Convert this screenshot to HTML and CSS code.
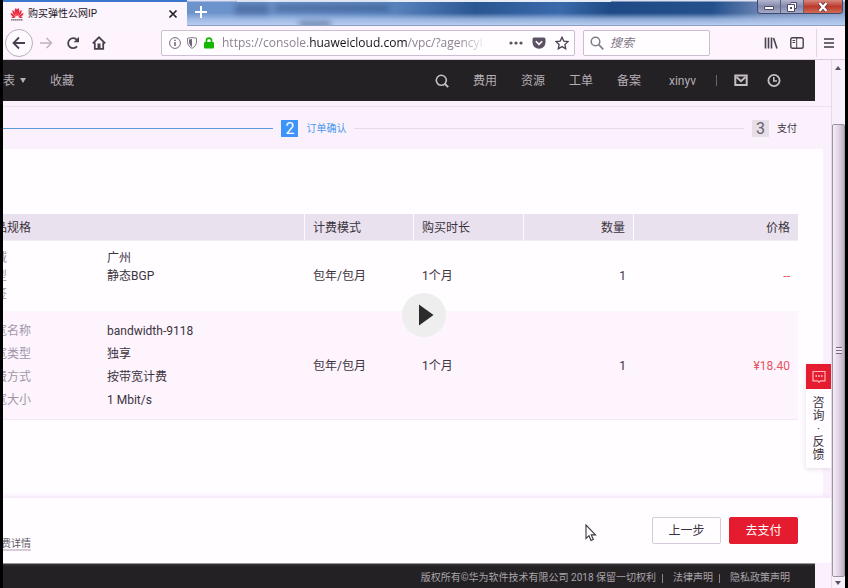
FILE: index.html
```html
<!DOCTYPE html>
<html lang="zh-CN">
<head>
<meta charset="utf-8">
<title>购买弹性公网IP</title>
<meta name="viewport" content="width=device-width, initial-scale=1">
<link rel="stylesheet" href="styles.css">
</head>
<body>
<div class="window">
  <div class="titlebar">
    <div class="tab">
      <svg class="tab-logo" viewBox="0 0 14 14" width="14" height="14" aria-hidden="true">
        <g fill="#e8283c">
          <path d="M6.8 9.6C4.6 7 4 3.600 5.300 1.300 6.300 1.300 7 2 7 3.200z"/>
          <path d="M7.200 9.600C9.400 7 10 3.600 8.700 1.300 7.700 1.300 7 2 7 3.200z"/>
          <path d="M6.200 9.800C3.200 8 1.800 5.400 2.500 3 3.800 3.200 5 5.500 6.200 9.800z"/>
          <path d="M7.800 9.800C10.800 8 12.200 5.400 11.500 3 10.200 3.200 9 5.500 7.800 9.800z"/>
          <path d="M5.700 10.200C2.700 10 .7 8.300.5 5.900 2 6 4 7.600 5.700 10.200z"/>
          <path d="M8.300 10.200C11.300 10 13.300 8.300 13.500 5.900 12 6 10 7.600 8.300 10.200z"/>
          <path d="M5.500 10.600C3.600 11.500 2 11.100 1.300 9.900 2.800 9.600 4.200 9.900 5.500 10.600z"/>
          <path d="M8.500 10.600C10.400 11.500 12 11.100 12.700 9.900 11.200 9.600 9.800 9.900 8.500 10.600z"/>
        </g>
        <path d="M1 12.800h12" stroke="#6d5560" stroke-width="1.200" stroke-dasharray="1.500 .4"/>
      </svg>
      <span class="tab-title">购买弹性公网IP</span>
      <button class="icon-button" aria-label="关闭标签页"><svg viewBox="0 0 10 10" width="10" height="10"><path d="M1.500 1.500l7 7M8.500 1.500l-7 7" stroke="#222" stroke-width="1.700"/></svg></button>
    </div>
    <button class="icon-button new-tab" aria-label="新建标签页"><svg viewBox="0 0 12 12" width="12" height="12"><path d="M6 0v12M0 6h12" stroke="#fff" stroke-width="2"/></svg></button>
    <div class="glass"><i class="smudge smudge-top"></i><i class="smudge smudge-left"></i><i class="smudge smudge-low"></i></div>
    <div class="window-controls">
      <button aria-label="最小化"><svg viewBox="0 0 12 10" width="12" height="10"><path d="M1.500 4.500h9v3h-9z" fill="#fff" stroke="#4d4a66"/></svg></button>
      <button aria-label="还原"><svg viewBox="0 0 12 10" width="12" height="10"><path d="M4.500.5h6v6h-2M1.500 2.500h7v7h-7z" fill="#fff" stroke="#4d4a66"/><path d="M4 5h2v2H4z" fill="#4d4a66"/></svg></button>
      <button class="close" aria-label="关闭"><svg viewBox="0 0 12 10" width="12" height="10"><path d="M2.500 1l7 8M9.500 1l-7 8" stroke="#6b3038" stroke-width="4"/><path d="M2.500 1l7 8M9.500 1l-7 8" stroke="#fff" stroke-width="2.400"/></svg></button>
    </div>
  </div>

  <div class="toolbar">
    <button class="icon-button back" aria-label="后退"><svg viewBox="0 0 16 16" width="16" height="16"><path d="M14 8H2.500M8 2.500L2.500 8 8 13.500" fill="none" stroke="#4a4150" stroke-width="1.800"/></svg></button>
    <button class="icon-button forward" aria-label="前进"><svg viewBox="0 0 16 16" width="16" height="16"><path d="M2 8h11.500M8.500 3l5 5-5 5" fill="none" stroke="#bdb2c1" stroke-width="1.500"/></svg></button>
    <button class="icon-button" aria-label="重新载入"><svg viewBox="0 0 14 14" width="14" height="14"><path d="M11 10.400A5 5 0 1 1 11 4" fill="none" stroke="#4a4150" stroke-width="1.800"/><path d="M13 .8v5.400H7.600z" fill="#4a4150"/></svg></button>
    <button class="icon-button home" aria-label="主页"><svg viewBox="0 0 14 14" width="14" height="14"><path d="M.8 7.300L7 1.300l6.200 6M2.800 6.500v6.300h8.400V6.500" fill="none" stroke="#4a4150" stroke-width="1.800"/><path d="M5.500 7.500h3V13h-3z" fill="#4a4150"/></svg></button>
    <div class="address">
      <svg viewBox="0 0 12 12" width="12" height="12" aria-hidden="true"><circle cx="6" cy="6" r="5.400" fill="none" stroke="#73697a" stroke-width="1"/><path d="M6 5v4M6 2.700v1.400" stroke="#5e5566" stroke-width="1.400"/></svg>
      <svg viewBox="0 0 12 12" width="12" height="12" aria-hidden="true"><path d="M1.500 1.200L6 .6l4.500.6v3.600c0 3-1.800 5-4.500 6.600-2.700-1.600-4.500-3.600-4.500-6.600z" fill="none" stroke="#82788a"/><path d="M6 2v8c-1.800-1.300-3-2.800-3-5V2.400z" fill="#6f6577"/></svg>
      <svg viewBox="0 0 12 12" width="12" height="12" aria-hidden="true"><path d="M3.500 6V3.600a2.500 2.500 0 0 1 5 0V6" fill="none" stroke="#14b800" stroke-width="1.700"/><rect x="1" y="5" width="10" height="6.500" rx="1" fill="#14b800"/></svg>
      <div class="url">
        <span class="url-text">https://console.<b>huaweicloud.com</b>/vpc/?agencyI</span>
        <input class="url-input" type="text" aria-label="网址">
      </div>
      <button class="icon-button" aria-label="页面操作"><svg viewBox="0 0 14 14" width="14" height="14"><g fill="#5c5263"><circle cx="2" cy="7" r="1.600"/><circle cx="7" cy="7" r="1.600"/><circle cx="12" cy="7" r="1.600"/></g></svg></button>
      <button class="icon-button" aria-label="保存到 Pocket"><svg viewBox="0 0 14 14" width="14" height="14"><path d="M2 1.500h10q1.500 0 1.500 1.500v3.500a6.500 6.200 0 0 1-13 0V3q0-1.500 1.500-1.500z" fill="#5c5263"/><path d="M3.800 5.300L7 8.400l3.200-3.100" fill="none" stroke="#fff" stroke-width="1.600"/></svg></button>
      <button class="icon-button" aria-label="加入书签"><svg viewBox="0 0 14 14" width="14" height="14"><path d="M7 1.200l1.800 3.900 4.100.5-3 2.900.8 4.200L7 10.600l-3.700 2.100.8-4.200-3-2.900 4.100-.5z" fill="none" stroke="#4a4150" stroke-width="1.300"/></svg></button>
    </div>
    <label class="searchbox">
      <svg viewBox="0 0 14 14" width="14" height="14" aria-hidden="true"><circle cx="5.500" cy="5.500" r="4.300" fill="none" stroke="#84798b" stroke-width="1.500"/><path d="M8.700 8.700l4.600 4.600" stroke="#84798b" stroke-width="1.700"/></svg>
      <input type="search" placeholder="搜索" aria-label="搜索">
    </label>
    <div class="toolbar-end">
      <button class="icon-button" aria-label="我的足迹"><svg viewBox="0 0 14 14" width="14" height="14"><path d="M1.500 1.500v11M4.500 1.500v11M7.500 1.500v11M9.500 2l3.500 10.500" stroke="#4a4150" stroke-width="1.600"/></svg></button>
      <button class="icon-button" aria-label="侧栏"><svg viewBox="0 0 14 14" width="14" height="14"><rect x=".8" y="1.800" width="12.400" height="10.400" rx="1.800" fill="none" stroke="#4a4150" stroke-width="1.400"/><path d="M6.700 2v10M2.500 4.500h2.700M2.500 6.500h2.700" stroke="#4a4150"/></svg></button>
      <button class="icon-button menu" aria-label="菜单"><svg viewBox="0 0 12 12" width="12" height="12"><path d="M1 2h10M1 6h10M1 10h10" stroke="#3f3746" stroke-width="1.500"/></svg></button>
    </div>
  </div>

  <div class="viewport">
    <div class="page-clip">
      <div class="page">
        <header class="console-bar">
          <a class="console-link" href="#services">服务列表 <i class="caret"></i></a>
          <a class="console-link favorites" href="#favorites">收藏</a>
          <nav class="console-nav">
            <button class="icon-button" aria-label="搜索"><svg viewBox="0 0 14 14" width="14" height="14"><circle cx="6.300" cy="6.300" r="5" fill="none" stroke="#c5bfc5" stroke-width="1.600"/><path d="M10 10l3.200 3.200" stroke="#c5bfc5" stroke-width="1.900"/></svg></button>
            <a class="console-link" href="#cost">费用</a>
            <a class="console-link" href="#resources">资源</a>
            <a class="console-link" href="#tickets">工单</a>
            <a class="console-link" href="#record">备案</a>
            <a class="console-link user" href="#user">xinyv</a>
            <i class="bar-rule"></i>
            <button class="icon-button" aria-label="消息"><svg viewBox="0 0 14 14" width="14" height="14"><path d="M1.300 1.500h11.400V11H1.300z" fill="none" stroke="#c5bfc5" stroke-width="2"/><path d="M2.500 3L7 7.200 11.500 3" fill="none" stroke="#c5bfc5" stroke-width="2"/></svg></button>
            <button class="icon-button clock" aria-label="历史"><svg viewBox="0 0 14 14" width="14" height="14"><circle cx="7" cy="6.500" r="5.600" fill="none" stroke="#c5bfc5" stroke-width="1.800"/><path d="M6.800 3v4H10" fill="none" stroke="#c5bfc5" stroke-width="1.600"/></svg></button>
          </nav>
        </header>

        <div class="steps">
          <i class="step-line done"></i>
          <span class="step-number current">2</span>
          <span class="step-name current-name">订单确认</span>
          <i class="step-line"></i>
          <span class="step-number">3</span>
          <span class="step-name">支付</span>
        </div>

        <main class="card">
          <table class="order">
            <colgroup><col><col class="col-mode"><col class="col-term"><col class="col-count"><col class="col-price"></colgroup>
            <thead>
              <tr><th>产品规格</th><th>计费模式</th><th>购买时长</th><th class="number">数量</th><th class="number">价格</th></tr>
            </thead>
            <tbody>
              <tr>
                <td><dl class="spec"><dt>区域</dt><dd>广州</dd><dt>类型</dt><dd>静态BGP</dd><dt>标签</dt><dd></dd></dl></td>
                <td>包年/包月</td><td>1个月</td><td class="number">1</td><td class="number price">--</td>
              </tr>
              <tr class="tinted">
                <td><dl class="spec roomy"><dt>带宽名称</dt><dd>bandwidth-9118</dd><dt>带宽类型</dt><dd>独享</dd><dt>计费方式</dt><dd>按带宽计费</dd><dt>带宽大小</dt><dd>1 Mbit/s</dd></dl></td>
                <td>包年/包月</td><td>1个月</td><td class="number">1</td><td class="number price">¥18.40</td>
              </tr>
            </tbody>
          </table>
        </main>

        <div class="actions">
          <a class="fee-link" href="#fees">了解计费详情</a>
          <button class="button">上一步</button>
          <button class="button primary">去支付</button>
        </div>

        <footer class="legal">
          <span>版权所有©华为软件技术有限公司 2018 保留一切权利</span>
          <i></i>
          <a href="#law">法律声明</a>
          <i></i>
          <a href="#privacy">隐私政策声明</a>
        </footer>
      </div>

      <a class="feedback" href="#feedback">
        <span class="feedback-icon"><svg viewBox="0 0 14 14" width="14" height="14" aria-hidden="true"><path d="M1 1.500h12v9.300H8.300L7 12.300l-1.300-1.500H1z" fill="none" stroke="#ffb3ba" stroke-width="1.200"/><path d="M3.500 6h1.500M6.200 6h1.600M9 6h1.500" stroke="#ffd5d8" stroke-width="1.500"/></svg></span>
        <span class="feedback-text"><span>咨</span><span>询</span><span>·</span><span>反</span><span>馈</span></span>
      </a>
    </div>

    <div class="scrollbar" aria-hidden="true">
      <div class="scroll-up"><i class="arrow-up"></i></div>
      <div class="scroll-thumb"><i class="grip"></i></div>
      <div class="scroll-down"><i class="arrow-down"></i></div>
    </div>
  </div>
</div>

<button class="play" aria-label="播放"><svg viewBox="0 0 44 44" width="44" height="44"><circle cx="22" cy="22" r="22" fill="#eeeeee"/><path d="M17 11.500v21l14.500-10.500z" fill="#2b2b2b"/></svg></button>
<svg class="cursor" viewBox="0 0 12 18" width="12" height="18" aria-hidden="true"><path d="M1 1v13.500l3-2.800 2 4.800 2.300-1-2-4.600h4.200z" fill="#fff" stroke="#3a3340" stroke-width="1.100"/></svg>
</body>
</html>
```

FILE: styles.css
```css
* { box-sizing: border-box; }

body {
  margin: 0;
  padding: 0 3px;
  background: #000;
  color: #3c3340;
  font: 12px/18px Roboto, "Noto Sans CJK SC", sans-serif;
  overflow: hidden;
}

a { color: inherit; text-decoration: none; }
button { font: inherit; padding: 0; border: 0; background: none; }
input { font: inherit; padding: 0; border: 0; background: none; outline: 0; }
svg { display: block; flex: none; }
dl, dd { margin: 0; }

.icon-button { display: flex; align-items: center; justify-content: center; flex: none; }

.window {
  position: relative;
  display: flex;
  flex-direction: column;
  height: 100vh;
}

/* Title bar */
.titlebar {
  display: flex;
  flex: none;
  height: 26px;
  border-bottom: 1px solid #8ba0c4;
  background:
    linear-gradient(#dfe2f3 0 1px, transparent 2px 13px, #a9c2e8cc 19px, #b9cdf0 25px),
    linear-gradient(100deg, #6d93cc 0 34%, #5f89c3 45%, #2a5691 56%, #3b6aab 66%, #1f4a85 72%, #24508c 84%, #6d86b4 90%, #8aa0c8);
}

.tab {
  display: flex;
  align-items: center;
  gap: 4px;
  width: 184px;
  height: 26px;
  padding: 0 9px 0 7px;
  border-top: 2px solid #3b78cc;
  background: #fdf5fe;
}

.tab-title {
  flex: 1;
  color: #1c171f;
  font-size: 10px;
}

.new-tab { width: 28px; height: 24px; }

.glass {
  position: relative;
  flex: 1;
  overflow: hidden;
}

.smudge { position: absolute; filter: blur(3px); background: #1f3c6a; }
.smudge-top { top: 5px; left: 60px; width: 114px; height: 6px; opacity: .5; }
.smudge-left { top: 4px; left: 20px; width: 34px; height: 10px; opacity: .4; }
.smudge-low { top: 22px; left: 84px; width: 32px; height: 5px; opacity: .6; }

.glass::before {
  content: "";
  position: absolute;
  top: 0;
  left: 22px;
  width: 69%;
  height: 2px;
  background: #e9edf8;
}

.window-controls {
  display: flex;
  height: 14px;
  margin-right: 2px;
  border: 1px solid #41486c;
  border-top: 0;
  border-radius: 0 0 4px 4px;
  overflow: hidden;
}

.window-controls button {
  display: flex;
  align-items: center;
  justify-content: center;
  width: 23px;
  border-right: 1px solid #59617f;
  background: linear-gradient(#b4b6cf, #8488ac 50%, #a5a9c8);
}

.window-controls .close {
  width: 38px;
  border-right: 0;
  background: linear-gradient(#d8897e, #bb3a2c 50%, #d26b54);
}

/* Navigation toolbar */
.toolbar {
  display: flex;
  align-items: center;
  flex: none;
  height: 34px;
  padding-left: 2px;
  border-bottom: 1px solid #d9cbdd;
  background: #fdf4fe;
}

.back {
  width: 28px;
  height: 28px;
  border: 1px solid #b9adbd;
  border-radius: 50%;
  background: #fffaff;
}

.forward { width: 26px; margin-right: 7px; }
.home { margin: 0 55px 0 12px; }

.address, .searchbox {
  display: flex;
  align-items: center;
  height: 26px;
  border: 1px solid #cbbecf;
  border-radius: 2px;
  background: #fffdff;
}

.address {
  flex: 1;
  gap: 5px;
  min-width: 0;
  padding: 0 5px 0 7px;
}

.address .icon-button { margin-left: 4px; }

.url {
  position: relative;
  flex: 1;
  min-width: 0;
  margin: 0 8px 0 2px;
  overflow: hidden;
  color: #8d8392;
  font: 12px/20px "Open Sans", sans-serif;
  white-space: nowrap;
  -webkit-mask-image: linear-gradient(90deg, #000 88%, transparent 98%);
  mask-image: linear-gradient(90deg, #000 88%, transparent 98%);
}

.url b { color: #17121a; font-weight: 400; }
.url-input { position: absolute; inset: 0; width: 100%; }

.searchbox {
  gap: 6px;
  width: 127px;
  margin-left: 8px;
  padding: 0 6px;
}

.searchbox input { flex: 1; min-width: 0; font-style: italic; }
.searchbox input::placeholder { color: #827788; opacity: 1; }

.toolbar-end {
  display: flex;
  align-items: center;
  gap: 12px;
  height: 28px;
  margin-left: 54px;
}

.menu {
  height: 28px;
  padding: 0 10px 0 6px;
  border-left: 1px solid #e2d6e5;
}

/* Web page area, scrolled 60px to the right */
.viewport { display: flex; flex: 1; min-height: 0; }

.page-clip {
  position: relative;
  flex: 1;
  min-width: 0;
  overflow: hidden;
  background: #fbf1fd;
}

.page {
  display: flex;
  flex-direction: column;
  height: 100%;
  margin-left: -60px;
}

.console-bar {
  display: flex;
  align-items: center;
  flex: none;
  height: 41px;
  margin-right: 16px;
  padding: 0 34px 0 24px;
  background: #242124;
  color: #b5aeb5;
}

.console-link { display: flex; align-items: center; gap: 5px; }
.favorites { margin-left: 24px; }

.caret {
  border: 3px solid transparent;
  border-top: 5px solid #b5aeb5;
  border-bottom: 0;
}

.console-nav {
  display: flex;
  align-items: center;
  gap: 24px;
  margin-left: auto;
}

.user { margin: 0 -4px 0 4px; }
.bar-rule { width: 1px; height: 11px; background: #6b666b; margin-right: -7px; }
.clock { margin-left: -5px; }

.steps {
  display: flex;
  align-items: center;
  gap: 8px;
  flex: none;
  height: 43px;
  margin-top: 5px;
  padding-right: 34px;
  border-top: 1px solid #ece1ee;
}

.step-line { flex: 389; height: 1px; background: #e6dbe9; }
.step-line.done { flex: 330; background: #5c9bd8; }

.step-number {
  width: 17px;
  height: 17px;
  background: #e6dfe8;
  color: #665e6a;
  font-size: 16px;
  line-height: 17px;
  text-align: center;
}

.step-number.current { background: #3d94fb; color: #fff; }
.step-name { padding-top: 2px; font-size: 10px; }
.current-name { color: #4a98ee; }

.card {
  flex: 1;
  min-height: 0;
  margin-right: 8px;
  padding: 65px 25px 0 32px;
  background: #fffdff;
}

/* Order table */
.order {
  width: 100%;
  border-collapse: separate;
  border-spacing: 0;
  table-layout: fixed;
}

.col-mode { width: 109px; }
.col-term, .col-count { width: 110px; }
.col-price { width: 164px; }

.order th {
  height: 27px;
  padding: 2px 8px 0;
  border-right: 1px solid #fffaff;
  border-bottom: 1px solid #f3ebf5;
  background: #e9e1ed;
  font-weight: 400;
  text-align: left;
}

.order th:last-child { border-right: 0; }
.order td { padding: 8px; }
.order .number { text-align: right; }
.order .price { color: #ea5360; }

.order .tinted td {
  padding: 9px 8px 7px;
  border-bottom: 1px solid #f1e8f4;
  background: #fdf4fe;
}

.spec {
  display: grid;
  grid-template-columns: 124px 1fr;
  grid-auto-rows: 18px;
}

.spec dt { color: #a196a6; }
.roomy { grid-auto-rows: 23px; line-height: 23px; }

/* Action bar and footer */
.actions {
  position: relative;
  display: flex;
  align-items: center;
  gap: 8px;
  flex: none;
  height: 65px;
  padding: 0 33px 0 28px;
  background: #fffdff;
  box-shadow: 0 -2px 5px #f3e4f7;
}

.fee-link {
  align-self: flex-end;
  margin: 0 auto 12px 0;
  border-bottom: 2px solid #d5cad8;
  color: #5f5663;
  font-size: 10px;
  line-height: 11px;
}

.button {
  width: 69px;
  height: 27px;
  border: 1px solid #d7cadb;
  border-radius: 2px;
  background: #fffdff;
  color: #3c3340;
}

.button.primary { border-color: #e51c2f; background: #e51c2f; color: #fff; }

.legal {
  display: flex;
  align-items: center;
  justify-content: flex-end;
  gap: 10px;
  flex: none;
  height: 25px;
  margin-right: 16px;
  padding: 4px 25px 0 0;
  border-top: 1px solid #858085;
  background: #242124;
  color: #aaa4aa;
  font-size: 10px;
}

.legal i { width: 1px; height: 9px; margin-left: -4px; background: #8c868c; }

/* Floating feedback tab */
.feedback {
  position: absolute;
  top: 304px;
  right: 0;
  width: 25px;
  background: #fffdff;
  box-shadow: 0 1px 5px #e6d8ea;
}

.feedback-icon {
  display: flex;
  align-items: center;
  justify-content: center;
  height: 25px;
  background: #e51c2f;
}

.feedback-text {
  display: flex;
  flex-direction: column;
  align-items: center;
  padding: 8px 0 6px;
  line-height: 13px;
}

/* Page scrollbar */
.scrollbar {
  display: flex;
  flex-direction: column;
  flex: none;
  width: 14px;
  border-left: 1px solid #e5dbe8;
  background: #f7eff9;
}

.scroll-up { height: 64px; padding: 6px 3px; }
.scroll-down { height: 11px; padding: 4px 3px; }
.arrow-up, .arrow-down { display: block; width: 0; border: 3px solid transparent; }
.arrow-up { border-top: 0; border-bottom: 4px solid #5c5161; }
.arrow-down { border-bottom: 0; border-top: 4px solid #5c5161; }

.scroll-thumb {
  display: flex;
  align-items: center;
  justify-content: center;
  flex: 1;
  border: 1px solid #9d92a6;
  border-radius: 2px;
  background: linear-gradient(90deg, #f6eff8, #ddd3e1 55%, #bdb1c2);
}

.grip {
  width: 6px;
  height: 7px;
  background: repeating-linear-gradient(#766b7c 0 1px, #efe8f1 1px 3px);
}

/* Video overlay */
.play { position: absolute; top: 293px; left: calc(50% - 22px); }
.cursor { position: absolute; top: 524px; left: 585px; }
```
